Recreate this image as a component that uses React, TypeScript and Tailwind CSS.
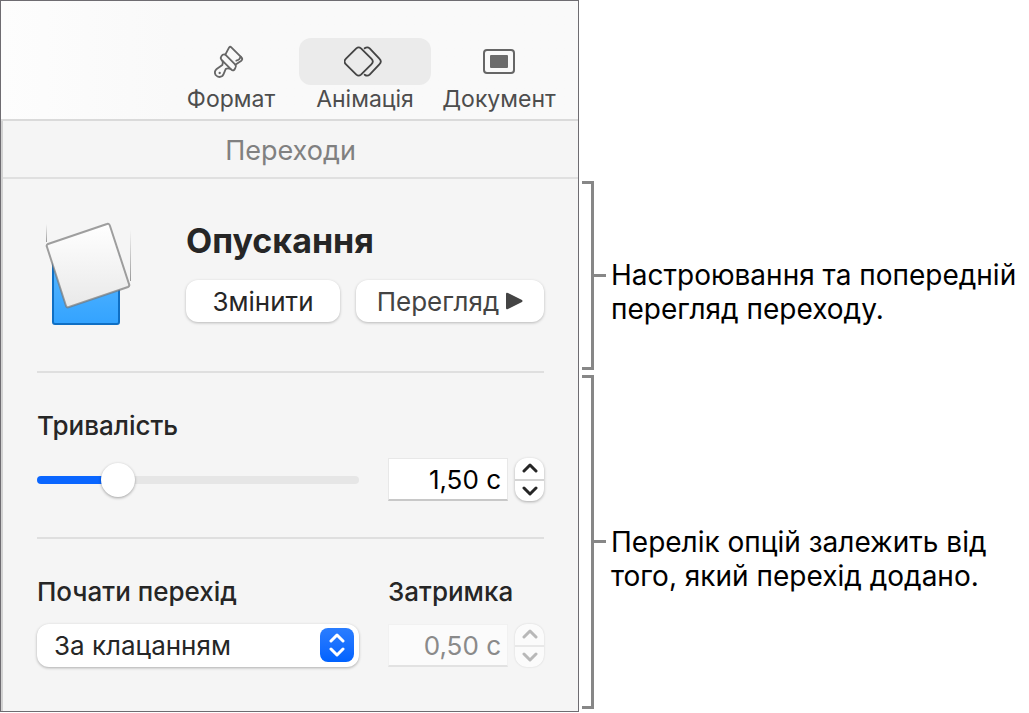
import { useState } from "react";
import type { CSSProperties, ReactNode } from "react";
import clsx from "clsx";

const tabs = [
  { id: "format", label: "Формат", icon: <BrushIcon /> },
  { id: "animate", label: "Анімація", icon: <AnimateIcon /> },
  { id: "document", label: "Документ", icon: <DocumentIcon /> },
];

const formatSeconds = (value: number) => `${value.toFixed(2).replace(".", ",")} с`;

function BrushIcon() {
  return (
    <svg
      width="40"
      height="42"
      viewBox="6 0 120 126"
      fill="none"
      stroke="#666666"
      strokeWidth="5.5"
      strokeLinejoin="round"
      strokeLinecap="round"
    >
      {/* bristles */}
      <path d="M49 41 L60 20 Q63 15 67 19 L98 50 Q102 55 97 59 L79 71" />
      <path d="M95 47 Q93 56 82 59" />
      {/* ferrule */}
      <path d="M49 41 L79 71 Q83 76 79 81 L76 86 Q71 90 67 86 L37 56 Q33 51 37 46 Q42 38 49 41 Z" />
      {/* handle */}
      <path d="M40 59 Q43 66 40 72 L23 84 Q14 92 20 102 Q29 112 40 105 Q44 101 46 94 L50 84 Q56 80 65 84" />
      <circle cx="32" cy="96" r="3.5" fill="#666666" stroke="none" />
    </svg>
  );
}

function AnimateIcon() {
  return (
    <svg
      width="42"
      height="34"
      viewBox="6 0 126 102"
      fill="none"
      stroke="#444444"
      strokeWidth="5.5"
      strokeLinejoin="round"
      strokeLinecap="round"
    >
      <path d="M43 10 Q50 4 57 10 L88 41 Q97 50 88 58 L57 89 Q50 95 43 89 L12 58 Q3 50 12 41 Z" />
      <path d="M68 10 Q76 4 83 10 L112 41 Q121 50 112 58 L83 89 Q76 95 68 89" />
    </svg>
  );
}

function DocumentIcon() {
  return (
    <svg width="34" height="34" viewBox="0 0 34 34" fill="none">
      <rect x="2" y="5" width="30" height="23" rx="3" stroke="#666666" strokeWidth="2" />
      <rect x="8" y="10" width="18" height="13" rx="1" fill="#6b6b6b" />
    </svg>
  );
}

function DropIcon() {
  return (
    <svg width="96" height="106" viewBox="0 1 96 106" fill="none">
      <defs>
        <linearGradient id="sheet" x1="0" y1="0" x2="0" y2="1">
          <stop offset="0" stopColor="#ffffff" />
          <stop offset="1" stopColor="#e9e9e9" />
        </linearGradient>
        <linearGradient id="slide" x1="0" y1="0" x2="0" y2="1">
          <stop offset="0" stopColor="#5ab8ff" />
          <stop offset="1" stopColor="#33a3ff" />
        </linearGradient>
        <linearGradient id="trail" x1="0" y1="0" x2="0" y2="1">
          <stop offset="0" stopColor="#999999" stopOpacity="0" />
          <stop offset="1" stopColor="#999999" />
        </linearGradient>
      </defs>
      <rect x="9" y="4" width="1" height="18" fill="url(#trail)" />
      <rect x="93" y="10" width="1" height="51" fill="url(#trail)" />
      <rect x="16" y="35" width="66" height="69" rx="2" fill="url(#slide)" stroke="#0f6fc4" strokeWidth="2" />
      <path
        d="M11 24 L70 4 Q72 3 73 6 L92 64 Q93 66 91 67 L32 87 Q30 88 29 86 L10 27 Q9 25 11 24 Z"
        fill="url(#sheet)"
        stroke="#777777"
        strokeOpacity="0.7"
        strokeWidth="2"
        strokeLinejoin="round"
      />
    </svg>
  );
}

function Chevron({ down = false }: { down?: boolean }) {
  return (
    <svg width="16" height="10" viewBox="0 0 16 10" fill="none" stroke="currentColor" strokeWidth="3">
      <path d={down ? "M2 2 L8 8 L14 2" : "M2 8 L8 2 L14 8"} strokeLinejoin="round" strokeLinecap="round" />
    </svg>
  );
}

interface SecondsFieldProps {
  id: string;
  label: string;
  value: number;
  disabled?: boolean;
  onChange: (value: number) => void;
}

function SecondsField({ id, label, value, disabled, onChange }: SecondsFieldProps) {
  return (
    <div className="flex h-[43px] items-stretch gap-[7px]">
      <input
        id={id}
        aria-label={label}
        type="text"
        readOnly
        disabled={disabled}
        value={formatSeconds(value)}
        className={clsx(
          "w-0 grow border border-b-2 pr-1.5 text-right text-[26px]",
          disabled
            ? "border-[#f1f1f1] border-b-[#e2e2e2] bg-[#fbfbfb] text-[#8a8a8a]"
            : "border-[#e8e8e8] border-b-[#c8c8c8] bg-white text-black"
        )}
      />
      <div
        className={clsx(
          "flex w-[29px] flex-col overflow-hidden rounded-xl",
          disabled
            ? "bg-[#fbfbfb] text-[#b8b8b8] shadow-[0_0_2px_rgba(0,0,0,0.15)]"
            : "bg-white text-[#262626] shadow-[0_1px_3px_rgba(0,0,0,0.3)]"
        )}
      >
        <button
          type="button"
          aria-label="Збільшити"
          disabled={disabled}
          onClick={() => onChange(value + 0.25)}
          className={clsx(
            "flex flex-1 items-center justify-center border-b-2",
            disabled ? "border-[#e8e8e8]" : "border-[#d4d4d4]"
          )}
        >
          <Chevron />
        </button>
        <button
          type="button"
          aria-label="Зменшити"
          disabled={disabled}
          onClick={() => onChange(Math.max(0, value - 0.25))}
          className="flex flex-1 items-center justify-center"
        >
          <Chevron down />
        </button>
      </div>
    </div>
  );
}

function Note({ className, children }: { className: string; children: ReactNode }) {
  return (
    <div className={clsx("flex items-center", className)}>
      <div className="w-3 self-stretch border-y-[3px] border-r-[3px] border-[#878787]" />
      <div className="h-[3px] w-3 bg-[#878787]" />
      {/* one line of top padding keeps the first line level with the tick */}
      <p className="pt-[34px] pl-[5px] text-[28px] leading-[34px] text-black">{children}</p>
    </div>
  );
}

export default function App() {
  const [activeTab, setActiveTab] = useState("animate");
  const [duration, setDuration] = useState(1.5);
  const [delay, setDelay] = useState(0.5);
  const [start, setStart] = useState("click");

  const maxDuration = 6.75;
  const fill = `${(duration / maxDuration) * 100}%`;

  return (
    <div className="flex bg-white font-['Inter',sans-serif]">
      <main className="grow border border-[#6e6c71] bg-[#f5f5f5] text-[#262626]">
        <nav className="flex justify-end gap-0.5 border-b-2 border-[#dadada] bg-linear-to-r from-[#fdfdfd] to-[#f9f9f9] to-30% pt-[37px] pr-[13px] pb-1.5">
          {tabs.map((tab) => (
            <button
              key={tab.id}
              type="button"
              onClick={() => setActiveTab(tab.id)}
              className="flex w-[132px] flex-col items-center text-[23px] leading-7 text-[#4d4d4d]"
            >
              <span
                className={clsx(
                  "flex h-[47px] w-full items-center justify-center rounded-xl",
                  activeTab === tab.id && "bg-[#ebebeb]"
                )}
              >
                {tab.icon}
              </span>
              {tab.label}
            </button>
          ))}
        </nav>

        <div className="border-l-2 border-[#d2d2d2]">
          <h1 className="border-b-2 border-[#e0e0e0] pt-3 pb-2 text-center text-[27px] leading-9 text-[#808080]">
            Переходи
          </h1>

          <div className="px-[34px]">
            <section className="grid grid-cols-[149px_1fr] border-b-2 border-[#dfdfdf] pt-[42px] pb-11">
              <DropIcon />
              <div>
                <h2 className="text-[34px] leading-10 font-bold">Опускання</h2>
                <div className="mt-[19px] flex gap-4 text-[26px]">
                  <button
                    type="button"
                    className="h-[42px] w-[154px] rounded-xl bg-white shadow-[0_1px_3px_rgba(0,0,0,0.25)]"
                  >
                    Змінити
                  </button>
                  <button
                    type="button"
                    className="flex h-[42px] grow items-center justify-center gap-1.5 rounded-xl bg-white text-[#444444] shadow-[0_1px_3px_rgba(0,0,0,0.25)]"
                  >
                    Перегляд
                    <svg width="18" height="18" viewBox="0 0 18 18" fill="currentColor">
                      <path d="M1 2 Q1 0 3 1 L17 8 Q18 9 17 10 L3 17 Q1 18 1 16 Z" />
                    </svg>
                  </button>
                </div>
              </div>
            </section>

            <section className="border-b-2 border-[#dfdfdf] pt-[38px] pb-9">
              <label htmlFor="duration" className="block text-[26px] leading-[30px] font-medium">
                Тривалість
              </label>
              <div className="mt-[17px] grid grid-cols-[1fr_156px] items-center gap-x-[29px]">
                <input
                  id="duration"
                  type="range"
                  min={0}
                  max={maxDuration}
                  step={0.25}
                  value={duration}
                  onChange={(e) => setDuration(Number(e.target.value))}
                  style={{ "--fill": fill } as CSSProperties}
                  className="w-full appearance-none bg-transparent [&::-webkit-slider-runnable-track]:h-2 [&::-webkit-slider-runnable-track]:rounded-full [&::-webkit-slider-runnable-track]:bg-[linear-gradient(to_right,#0a66ff_var(--fill),#e6e6e6_var(--fill))] [&::-webkit-slider-thumb]:-mt-[13px] [&::-webkit-slider-thumb]:size-[34px] [&::-webkit-slider-thumb]:appearance-none [&::-webkit-slider-thumb]:rounded-full [&::-webkit-slider-thumb]:bg-white [&::-webkit-slider-thumb]:shadow-[0_1px_3px_rgba(0,0,0,0.35)]"
                />
                <SecondsField id="duration-value" label="Тривалість" value={duration} onChange={setDuration} />
              </div>
            </section>

            <section className="grid grid-cols-[1fr_156px] gap-x-[29px] gap-y-[17px] pt-[38px] pb-11">
              <label htmlFor="start" className="text-[26px] leading-[30px] font-medium">
                Почати перехід
              </label>
              <label htmlFor="delay" className="text-[26px] leading-[30px] font-medium">
                Затримка
              </label>
              <div className="relative">
                <select
                  id="start"
                  value={start}
                  onChange={(e) => setStart(e.target.value)}
                  className="h-[43px] w-full appearance-none rounded-xl bg-white pl-[17px] text-[26px] shadow-[0_1px_3px_rgba(0,0,0,0.3)]"
                >
                  <option value="click">За клацанням</option>
                  <option value="auto">Автоматично</option>
                </select>
                <span className="pointer-events-none absolute top-1 right-[5px] flex size-[34px] flex-col items-center justify-center gap-1 rounded-lg bg-linear-to-b from-[#2a7dff] to-[#0062ff] text-white">
                  <Chevron />
                  <Chevron down />
                </span>
              </div>
              <SecondsField id="delay" label="Затримка" value={delay} disabled onChange={setDelay} />
            </section>
          </div>
        </div>
      </main>

      <aside className="flex w-[450px] shrink-0 flex-col gap-[5px] pt-[181px] pb-[3px] pl-[3px]">
        <Note className="flex-[189]">
          Настроювання та попередній
          <br />
          перегляд переходу.
        </Note>
        <Note className="flex-[335]">
          Перелік опцій залежить від
          <br />
          того, який перехід додано.
        </Note>
      </aside>
    </div>
  );
}
